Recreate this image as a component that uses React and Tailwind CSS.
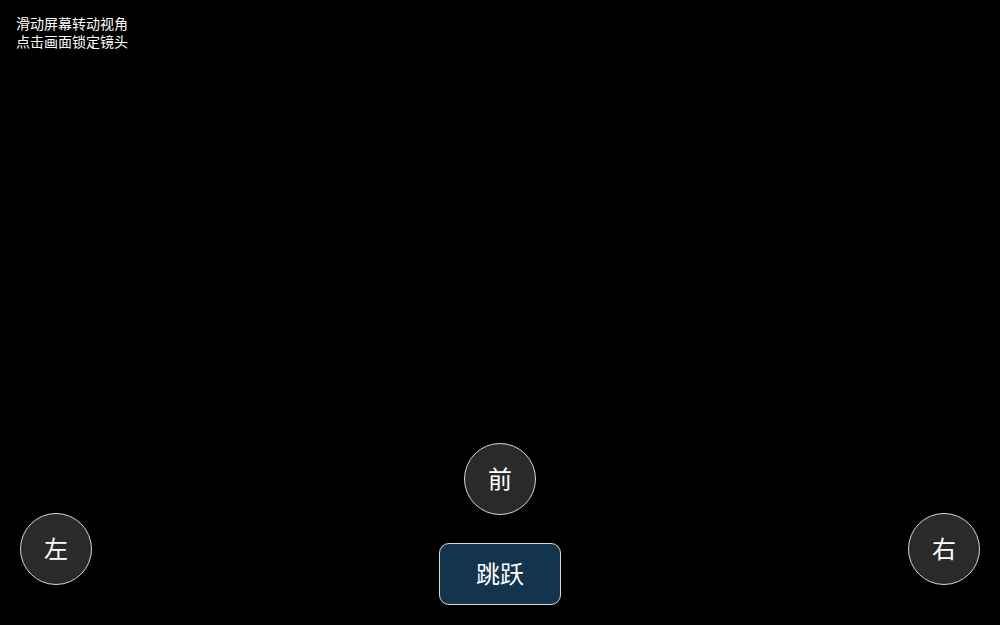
export default function App() {
  const font = { fontFamily: '"Noto Sans CJK SC", "Noto Sans", sans-serif' };
  return (
    <div className="w-[1000px] h-[625px] bg-black text-white flex flex-col justify-between overflow-hidden" style={font}>
      <div className="pt-[14px] pl-4 text-[14px] leading-[18px]">
        <div>滑动屏幕转动视角</div>
        <div>点击画面锁定镜头</div>
      </div>

      <div className="flex items-end justify-between px-5 pb-5">
        <button className="mb-5 w-[72px] h-[72px] rounded-full bg-[#2a2a2a] border border-[#d8d8d8] text-[24px] leading-none pb-[3px] flex items-center justify-center">
          左
        </button>
        <div className="flex flex-col items-center gap-7">
          <button className="w-[72px] h-[72px] rounded-full bg-[#2a2a2a] border border-[#d8d8d8] text-[24px] leading-none pb-[3px] flex items-center justify-center">
            前
          </button>
          <button className="w-[122px] h-[62px] rounded-[10px] bg-[#12344d] border border-[#d8d8d8] text-[24px] leading-none pb-[3px] flex items-center justify-center">
            跳跃
          </button>
        </div>
        <button className="mb-5 w-[72px] h-[72px] rounded-full bg-[#2a2a2a] border border-[#d8d8d8] text-[24px] leading-none pb-[3px] flex items-center justify-center">
          右
        </button>
      </div>
    </div>
  );
}
